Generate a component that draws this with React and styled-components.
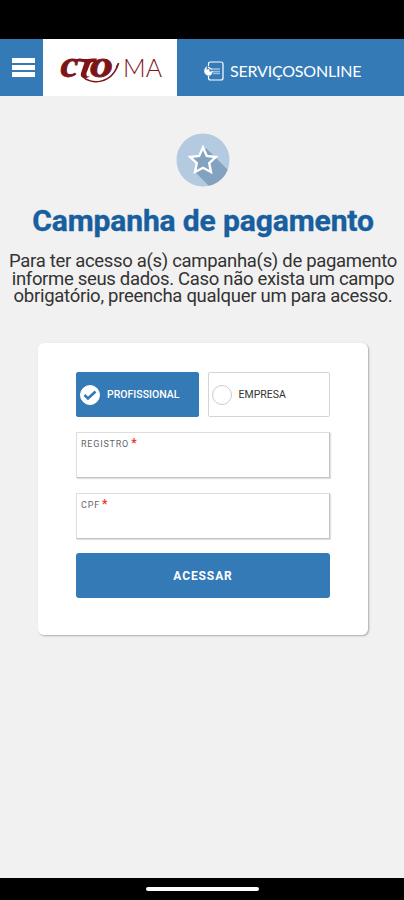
import React, { useState } from "react";
import styled, { createGlobalStyle } from "styled-components";

const options = [
  { id: "profissional", label: "PROFISSIONAL" },
  { id: "empresa", label: "EMPRESA" },
];

const fields = [
  { id: "registro", label: "REGISTRO" },
  { id: "cpf", label: "CPF" },
];

const Logo = () => (
  <svg width="134" height="57" viewBox="43 39 134 57">
    <g fill="#7d1518" fontFamily="Liberation Serif, serif" fontWeight="700" fontStyle="italic">
      <text x="60.5" y="76.5" fontSize="37" textLength="18" lengthAdjust="spacingAndGlyphs" stroke="#7d1518" strokeWidth="0.8">c</text>
      <text x="90" y="76.5" fontSize="37" textLength="23" lengthAdjust="spacingAndGlyphs" stroke="#7d1518" strokeWidth="0.8">o</text>
    </g>
    <path d="M74.5 63C76 57.5 80 58.5 84 59C88 59.5 92 58 97 58.5L95.500 62.500C93 61.500 91 62 90 64L86.500 73C86 76 87.500 77 90 76C86 80 79.500 78 81 73L84.500 62.500C80 61 77 61 74.500 63Z" fill="#7d1518" />
    <path d="M82 76C90 85 112 85 118.500 63" fill="none" stroke="#7d1518" strokeWidth="1.5" />
    <path d="M116 66L119.500 62.500L116.500 70Z" fill="#7d1518" />
    <text x="123" y="77" fontSize="25" fontFamily="Lato, sans-serif" fontWeight="300" fill="#7d1518" textLength="39" lengthAdjust="spacingAndGlyphs">MA</text>
  </svg>
);

const ServiceIcon = () => (
  <svg width="22" height="20" viewBox="0 0 22 20" fill="none" stroke="#fff">
    <path d="M5.500 5V3Q5.500 1 7.500 1H18Q20 1 20 3V17Q20 19 18 19H7.500Q5.500 19 5.500 17V15" strokeWidth="1.2" />
    <path d="M3.500 5.500Q0 9 2 12.500Q4 15.500 8 14L10 10L6.500 11L6 8L3.500 9Z" fill="#fff" strokeWidth="0.4" />
    <path d="M5 6L9 8.500" strokeWidth="1.2" />
    <path d="M9 8H17M10 10.500H17M10 12.500H17" strokeWidth="1.4" opacity="0.5" />
  </svg>
);

const StarBadge = () => (
  <svg width="54" height="54" viewBox="0 0 54 54">
    <defs>
      <clipPath id="disc">
        <circle cx="27" cy="27" r="26.500" />
      </clipPath>
    </defs>
    <circle cx="27" cy="27" r="26.500" fill="#b3cae0" />
    <path d="M30 15L56 41V56H36L19 39Z" fill="#83a2bf" clipPath="url(#disc)" />
    <path d="M27 14.500L30.800 23L39.800 24L33.200 30.200L35 39L27 34.800L19 39L20.800 30.200L14.200 24L23.200 23Z" fill="#83a2bf" stroke="#fff" strokeWidth="2.400" />
  </svg>
);

export default function App() {
  const [selected, setSelected] = useState("profissional");

  return (
    <Screen>
      <GlobalStyle />
      <StatusBar />
      <Header>
        <MenuButton aria-label="Menu">
          <span />
          <span />
          <span />
        </MenuButton>
        <Brand>
          <Logo />
        </Brand>
        <Services>
          <ServiceIcon />
          <span>SERVIÇOSONLINE</span>
        </Services>
      </Header>
      <Content>
        <StarBadge />
        <Title>Campanha de pagamento</Title>
        <Description>
          <Line $spacing="-0.31px">Para ter acesso a(s) campanha(s) de pagamento</Line>
          <Line $spacing="-0.32px">informe seus dados. Caso não exista um campo</Line>
          <Line $spacing="-0.28px">obrigatório, preencha qualquer um para acesso.</Line>
        </Description>
        <Card>
          <Options>
            {options.map(({ id, label }) => (
              <Option
                key={id}
                type="button"
                $active={selected === id}
                onClick={() => setSelected(id)}
              >
                <Radio $active={selected === id}>
                  {selected === id && (
                    <svg width="14" height="12" viewBox="0 0 14 12">
                      <path d="M1.500 6L5 9.500L12.500 2.500" fill="none" stroke="#337ab7" strokeWidth="2.600" />
                    </svg>
                  )}
                </Radio>
                <span>{label}</span>
              </Option>
            ))}
          </Options>
          {fields.map(({ id, label }) => (
            <Field key={id}>
              <span>
                {label} <b>*</b>
              </span>
              <input name={id} />
            </Field>
          ))}
          <Submit type="button">ACESSAR</Submit>
        </Card>
      </Content>
      <NavBar>
        <span />
      </NavBar>
    </Screen>
  );
}

const GlobalStyle = createGlobalStyle`
  * {
    box-sizing: border-box;
  }
  body {
    margin: 0;
  }
  button,
  input {
    font-family: inherit;
  }
`;

const Screen = styled.div`
  width: 404px;
  height: 900px;
  display: flex;
  flex-direction: column;
  overflow: hidden;
  background-color: #f1f1f1;
  font-family: Roboto, sans-serif;
`;

const StatusBar = styled.div`
  height: 39px;
  flex-shrink: 0;
  background-color: #000;
`;

const Header = styled.header`
  display: flex;
  height: 57px;
  flex-shrink: 0;
  background-color: #337ab7;
`;

const MenuButton = styled.button`
  width: 43px;
  padding: 0 0 0 3px;
  border: none;
  background: none;
  display: flex;
  flex-direction: column;
  align-items: center;
  justify-content: center;
  gap: 2px;
  span {
    width: 23px;
    height: 5px;
    background-color: #fff;
  }
`;

const Brand = styled.div`
  width: 134px;
  height: 57px;
  background-color: #fff;
`;

const Services = styled.div`
  display: flex;
  align-items: center;
  gap: 5px;
  padding: 6px 0 0 26px;
  color: #fff;
  font-family: Lato, sans-serif;
  font-size: 16px;
  letter-spacing: -0.2px;
  white-space: nowrap;
`;

const Content = styled.main`
  flex: 1;
  display: flex;
  flex-direction: column;
  align-items: center;
  padding: 37px 0 0 2px;
`;

const Title = styled.h1`
  margin: 15px 0 0;
  line-height: 37px;
  font-size: 30px;
  font-weight: 700;
  letter-spacing: -0.12px;
  color: #185f9f;
  -webkit-text-stroke: 0.4px #185f9f;
  white-space: nowrap;
`;

const Description = styled.p`
  margin: 14px 0 0;
  display: flex;
  flex-direction: column;
  align-items: center;
  color: #333;
  font-size: 18.500px;
  line-height: 17.700px;
`;

const Line = styled.span`
  white-space: nowrap;
  letter-spacing: ${({ $spacing }) => $spacing};
`;

const Card = styled.section`
  width: 330px;
  height: 292px;
  margin-top: 37px;
  padding: 29px 38px 0 38px;
  display: flex;
  flex-direction: column;
  background-color: #fff;
  border-radius: 6px;
  box-shadow: 1px 1px 2px rgba(0, 0, 0, 0.3);
`;

const Options = styled.div`
  display: flex;
  gap: 9px;
`;

const Option = styled.button`
  flex: 1;
  height: 45px;
  padding: 0 0 0 3px;
  display: flex;
  align-items: center;
  gap: 7px;
  border: 1px solid ${({ $active }) => ($active ? "#337ab7" : "#d5d5d5")};
  border-radius: 2px;
  background-color: ${({ $active }) => ($active ? "#337ab7" : "#fff")};
  color: ${({ $active }) => ($active ? "#fff" : "#333")};
  font-size: 10.500px;
  font-weight: ${({ $active }) => ($active ? 500 : 400)};
`;

const Radio = styled.i`
  width: 20px;
  height: 20px;
  display: flex;
  align-items: center;
  justify-content: center;
  border: 1px solid ${({ $active }) => ($active ? "#fff" : "#ccc")};
  border-radius: 50%;
  background-color: #fff;
`;

const Field = styled.label`
  height: 46px;
  margin-top: 15px;
  padding: 5px 4px 0;
  border: 1px solid #dedede;
  border-right-color: #c4c4c4;
  border-bottom-color: #c4c4c4;
  box-shadow: 1px 1px 1px rgba(0, 0, 0, 0.12);
  color: #666;
  font-size: 9px;
  line-height: 11px;
  letter-spacing: 0.8px;
  b {
    margin-left: -1px;
    color: #e32;
    font-size: 12px;
  }
  span {
    display: block;
  }
  input {
    display: block;
    width: 100%;
    height: 24px;
    border: none;
    outline: none;
    background: none;
  }
`;

const Submit = styled.button`
  height: 45px;
  margin-top: 14px;
  border: none;
  border-radius: 3px;
  background-color: #337ab7;
  color: #fff;
  font-size: 12px;
  font-weight: 700;
  letter-spacing: 0.9px;
`;

const NavBar = styled.footer`
  height: 22px;
  flex-shrink: 0;
  display: flex;
  align-items: center;
  justify-content: center;
  background-color: #000;
  span {
    width: 113px;
    height: 4px;
    border-radius: 2px;
    background-color: #fff;
  }
`;
